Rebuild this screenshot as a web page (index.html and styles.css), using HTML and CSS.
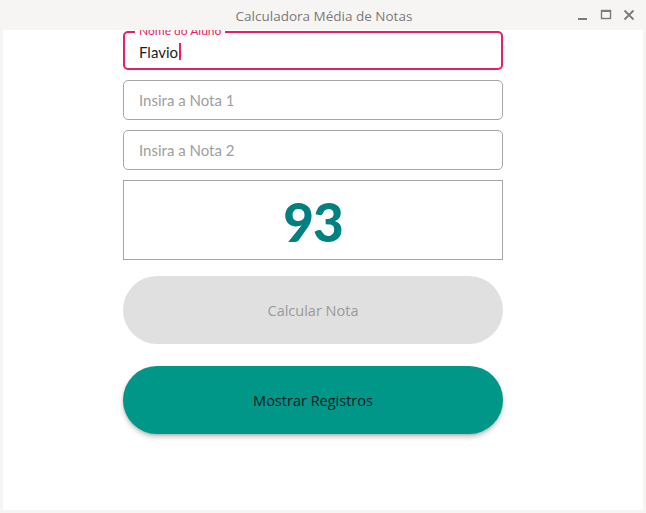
FILE: index.html
```html
<!DOCTYPE html>
<html lang="pt">
<head>
<meta charset="utf-8">
<title>Calculadora Média de Notas</title>
<link rel="stylesheet" href="styles.css">
</head>
<body>
<div class="window">
  <header class="titlebar">
    <span class="title">Calculadora Média de Notas</span>
    <div class="controls">
      <svg class="ctl" width="12" height="12" viewBox="0 0 12 12"><rect x="1" y="9" width="9" height="2" fill="#7b7b7b"/></svg>
      <svg class="ctl" width="12" height="12" viewBox="0 0 12 12"><rect x="1.5" y="1.5" width="9" height="8" fill="none" stroke="#7b7b7b" stroke-width="1.4"/><rect x="1" y="1" width="10" height="2" fill="#7b7b7b"/></svg>
      <svg class="ctl" width="12" height="12" viewBox="0 0 12 12"><path d="M1.5 1.5L10.5 10.5M10.5 1.5L1.5 10.5" stroke="#7b7b7b" stroke-width="1.8"/></svg>
    </div>
  </header>
  <main class="content">
    <div class="form">
      <div class="field focused">
        <span class="label">Nome do Aluno</span>
        <span class="value">Flavio</span><span class="caret"></span>
      </div>
      <div class="field"><span class="placeholder">Insira a Nota 1</span></div>
      <div class="field"><span class="placeholder">Insira a Nota 2</span></div>
      <div class="result">93</div>
      <button class="btn disabled">Calcular Nota</button>
      <button class="btn primary">Mostrar Registros</button>
    </div>
  </main>
</div>
</body>
</html>
```
FILE: styles.css
```css
html, body {
  margin: 0;
  padding: 0;
}
body {
  width: 646px;
  height: 513px;
  background: #f6f5f4;
  font-family: Lato, "Open Sans", sans-serif;
  overflow: hidden;
}
.window {
  display: flex;
  flex-direction: column;
  height: 513px;
}
.titlebar {
  height: 30px;
  display: flex;
  align-items: center;
  justify-content: center;
  position: relative;
  flex: none;
}
.title {
  font-family: "Open Sans", "Noto Sans", sans-serif;
  font-size: 13.5px;
  color: #7a7a7a;
  margin-top: 1px;
  margin-left: 2px;
}
.controls {
  position: absolute;
  right: 11px;
  top: 9px;
  display: flex;
  gap: 11px;
}
.ctl {
  display: block;
}
.content {
  flex: 1;
  margin: 0 3px 3px;
  background: #ffffff;
  overflow: hidden;
  position: relative;
}
.form {
  width: 380px;
  margin: 0 0 0 120px;
  display: flex;
  flex-direction: column;
}
.field {
  box-sizing: border-box;
  height: 40px;
  border: 1px solid #a6a6a6;
  border-radius: 5px;
  padding: 0 15px;
  display: flex;
  align-items: center;
  margin-bottom: 10px;
  position: relative;
  font-size: 15px;
}
.field.focused {
  border: 2px solid #e91e63;
  padding: 0 14px;
  height: 39px;
  margin-top: 1px;
  margin-bottom: 10px;
}
.label {
  position: absolute;
  left: 10px;
  top: -9px;
  background: #fff;
  padding: 0 4px;
  font-size: 12px;
  color: #e91e63;
  line-height: 14px;
}
.value {
  color: #1d1d1d;
  padding-top: 2px;
}
.caret {
  display: inline-block;
  width: 2px;
  height: 17px;
  background: #e91e63;
  margin-left: 1px;
  margin-top: 2px;
}
.placeholder {
  color: #9e9e9e;
}
.result {
  box-sizing: border-box;
  height: 80px;
  border: 1px solid #a6a6a6;
  display: flex;
  align-items: center;
  justify-content: center;
  font-size: 53px;
  font-weight: 900;
  color: #008080;
  padding-top: 3px;
  letter-spacing: -1px;
}
.btn {
  height: 68px;
  border: none;
  border-radius: 34px;
  font-family: "Open Sans", "Noto Sans", sans-serif;
  font-size: 14.5px;
  padding: 0;
}
.btn.disabled {
  margin-top: 16px;
  background: #e0e0e0;
  color: #9a9a9a;
}
.btn.primary {
  margin-top: 22px;
  background: #009688;
  color: #10201e;
  box-shadow: 0 3px 5px rgba(0, 0, 0, 0.22), 0 1px 2px rgba(0, 0, 0, 0.12);
}
```
